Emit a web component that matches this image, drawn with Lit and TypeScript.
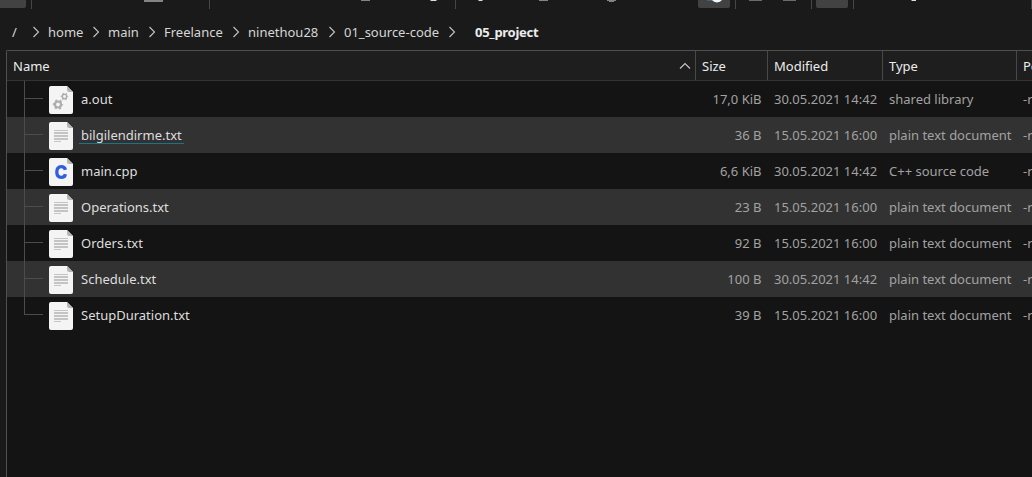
import { LitElement, html, css, svg } from "lit";
import { customElement, property } from "lit/decorators.js";
import { classMap } from "lit/directives/class-map.js";

type Kind = "binary" | "text" | "cpp";
interface FileRow { name: string; kind: Kind; size: string; modified: string; type: string; hovered?: boolean; }

const FILES: FileRow[] = [
  { name: "a.out", kind: "binary", size: "17,0 KiB", modified: "30.05.2021 14:42", type: "shared library" },
  { name: "bilgilendirme.txt", kind: "text", size: "36 B", modified: "15.05.2021 16:00", type: "plain text document", hovered: true },
  { name: "main.cpp", kind: "cpp", size: "6,6 KiB", modified: "30.05.2021 14:42", type: "C++ source code" },
  { name: "Operations.txt", kind: "text", size: "23 B", modified: "15.05.2021 16:00", type: "plain text document" },
  { name: "Orders.txt", kind: "text", size: "92 B", modified: "15.05.2021 16:00", type: "plain text document" },
  { name: "Schedule.txt", kind: "text", size: "100 B", modified: "30.05.2021 14:42", type: "plain text document" },
  { name: "SetupDuration.txt", kind: "text", size: "39 B", modified: "15.05.2021 16:00", type: "plain text document" },
];

@customElement("file-icon")
class FileIcon extends LitElement {
  @property() kind: Kind = "text";
  static styles = css`
    :host { display: block; width: 24px; height: 28px; margin-top: 2px; }
    svg { display: block; }
  `;
  private glyph() {
    if (this.kind === "cpp")
      return svg`<path d="M16.4 11.9C16 9.8 14.6 8.6 12.3 8.6C9.3 8.6 7.8 10.7 7.8 14C7.8 17.3 9.3 19.4 12.3 19.4C14.6 19.4 16 18.2 16.4 16.1" fill="none" stroke="#2f5fe0" stroke-width="3.3"/>`;
    if (this.kind === "binary")
      return svg`
        <g fill="none" stroke="#adadad">
          <circle cx="9" cy="18.5" r="3" stroke-width="2.2"/>
          <circle cx="9" cy="18.5" r="4.4" stroke-width="1.5" stroke-dasharray="1.95 2.658" stroke-dashoffset=".97"/>
          <circle cx="15.5" cy="10.5" r="2.2" stroke-width="1.5"/>
          <circle cx="15.5" cy="10.5" r="3.2" stroke-width="1.2" stroke-dasharray="1.35 2.001" stroke-dashoffset=".67"/>
        </g>`;
    return svg`<path d="M5 8h14v1H5zM5 10h14v2H5zM5 13h14v2H5zM5 16h14v2H5zM5 19h7v1H5z" fill="#c4c4c4"/>`;
  }
  render() {
    return html`<svg width="24" height="28" viewBox="0 0 24 28">
      <path d="M2 0H18L24 6V26Q24 28 22 28H2Q0 28 0 26V2Q0 0 2 0Z" fill="#f4f4f4"/>
      <path d="M18 0L24 6H20Q18 6 18 4Z" fill="#b6b6b6"/>
      ${this.glyph()}
    </svg>`;
  }
}

@customElement("tool-strip")
class ToolStrip extends LitElement {
  static styles = css`
    :host { display: block; height: 9px; }
    svg { display: block; }
  `;
  render() {
    return html`<svg width="1032" height="9" viewBox="0 0 1032 9">
      <g fill="#424242">
        <path d="M0 0H26V6Q26 8 24 8H0Z"/>
        <path d="M698 0H730V6Q730 8 728 8H700Q698 8 698 6Z"/>
        <path d="M816 0H848V6Q848 8 846 8H818Q816 8 816 6Z"/>
      </g>
      <path d="M31 0h1v9h-1zM209 0h1v9h-1zM455 0h1v9h-1zM735 0h1v9h-1zM811 0h1v9h-1zM853 0h1v9h-1zM1031 0h1v9h-1z" fill="#464646"/>
      <path d="M144 0h19v2h-19zM361 0h9v1h-9zM539 0h9v1h-9zM607 0h9v1h-9zM609 1h5v1h-5z" fill="#848484"/>
      <path d="M749 0h13v1h-13zM783 0h13v1h-13z" fill="#6b6b6b"/>
      <path d="M431 0h5v1h-5zM479 0h3v1h-3zM912 0h4v1h-4z" fill="#dcdcdc"/>
      <path d="M430 0h1v1h-1zM436 0h1v1h-1zM478 0h1v1h-1zM482 0h1v1h-1zM911 0h1v1h-1z" fill="#777"/>
      <path d="M707 0h7v1h-7z" fill="#47607c"/>
      <path d="M712 0h10q-1.6 2.4-5 2.4T712 0Z" fill="#f4f8fc"/>
    </svg>`;
  }
}

@customElement("path-bar")
class PathBar extends LitElement {
  static styles = css`
    :host { display: grid; grid-template-columns: 36px 60px 56px 84px 96px 131px 1fr; align-items: center; height: 41px; padding: 5px 0 0 12px; box-sizing: border-box; color: #d6d6d6; }
    .crumb { display: flex; align-items: center; justify-content: space-between; line-height: 18px; padding-right: 8px; }
    .crumb svg { margin-top: -1px; }
    .wide { padding-right: 19px; }
    .current { font-weight: 700; letter-spacing: -.28px; color: #ececec; line-height: 18px; }
    svg { display: block; flex: none; }
  `;
  render() {
    const parts = ["/", "home", "main", "Freelance", "ninethou28", "01_source-code"];
    return html`
      ${parts.map((p, i) => html`<div class=${classMap({ crumb: true, wide: i === parts.length - 1 })}>
        <span>${p}</span>
        <svg width="8" height="12" viewBox="0 0 8 12"><path d="M1.5 1L6.5 6L1.5 11" fill="none" stroke="#c4c4c4" stroke-width="1.1"/></svg>
      </div>`)}
      <span class="current">05_project</span>`;
  }
}

@customElement("app-root")
class AppRoot extends LitElement {
  static styles = css`
    :host { display: flex; flex-direction: column; width: 1032px; height: 477px; overflow: hidden; background: #1a1a1a; color: #dedede; font: 13px "Noto Sans", sans-serif; white-space: nowrap; }
    .view { flex: 1; margin-left: 6px; border-top: 1px solid #505050; border-left: 1px solid #505050; border-top-left-radius: 2px; background: #141414; overflow: hidden; }
    .head, .row { display: grid; grid-template-columns: 689px 72px 115px 134px 60px; }
    .head { height: 30px; box-sizing: border-box; background: #1e1e1e; border-bottom: 1px solid #343434; color: #ececec; line-height: 29px; }
    .head > div { border-right: 1px solid #484848; padding-left: 6px; display: flex; justify-content: space-between; align-items: center; }
    .head span { line-height: 18px; padding-top: 1px; }
    .sort { margin-right: 4px; }
    .row { height: 36px; line-height: 36px; color: #a2a2a2; }
    .row:nth-child(odd) { background: #323232; }
    .name { display: flex; align-items: center; color: #dedede; }
    .branch { flex: none; width: 42px; height: 36px; }
    .branch svg { display: block; }
    .label { margin: 0 0 1px 6px; padding: 2px 2px 0; line-height: 16px; border-bottom: 1px solid transparent; }
    .hovered { border-bottom-color: #1f7187; }
    .size { text-align: right; padding-right: 6.5px; }
    .cell { padding-left: 6px; }
  `;
  render() {
    return html`
      <tool-strip></tool-strip>
      <path-bar></path-bar>
      <div class="view">
        <div class="head">
          <div><span>Name</span><svg class="sort" width="12" height="8" viewBox="0 0 12 8"><path d="M1 6.5L6 1.5L11 6.5" fill="none" stroke="#c8c8c8" stroke-width="1.1"/></svg></div>
          <div><span>Size</span></div><div><span>Modified</span></div><div><span>Type</span></div><div><span>Permissions</span></div>
        </div>
        ${FILES.map((f, i) => html`<div class="row">
          <div class="name">
            <span class="branch"><svg width="42" height="36" viewBox="0 0 42 36"><path d=${i === FILES.length - 1 ? "M17 0h1v17h18v1H17z" : "M17 0h1v17h18v1H18v18h-1z"} fill="#4c4c4c"/></svg></span>
            <file-icon .kind=${f.kind}></file-icon>
            <span class=${classMap({ label: true, hovered: !!f.hovered })}>${f.name}</span>
          </div>
          <div class="size">${f.size}</div>
          <div class="cell">${f.modified}</div>
          <div class="cell">${f.type}</div>
          <div class="cell">-rw-r--r--</div>
        </div>`)}
      </div>`;
  }
}
